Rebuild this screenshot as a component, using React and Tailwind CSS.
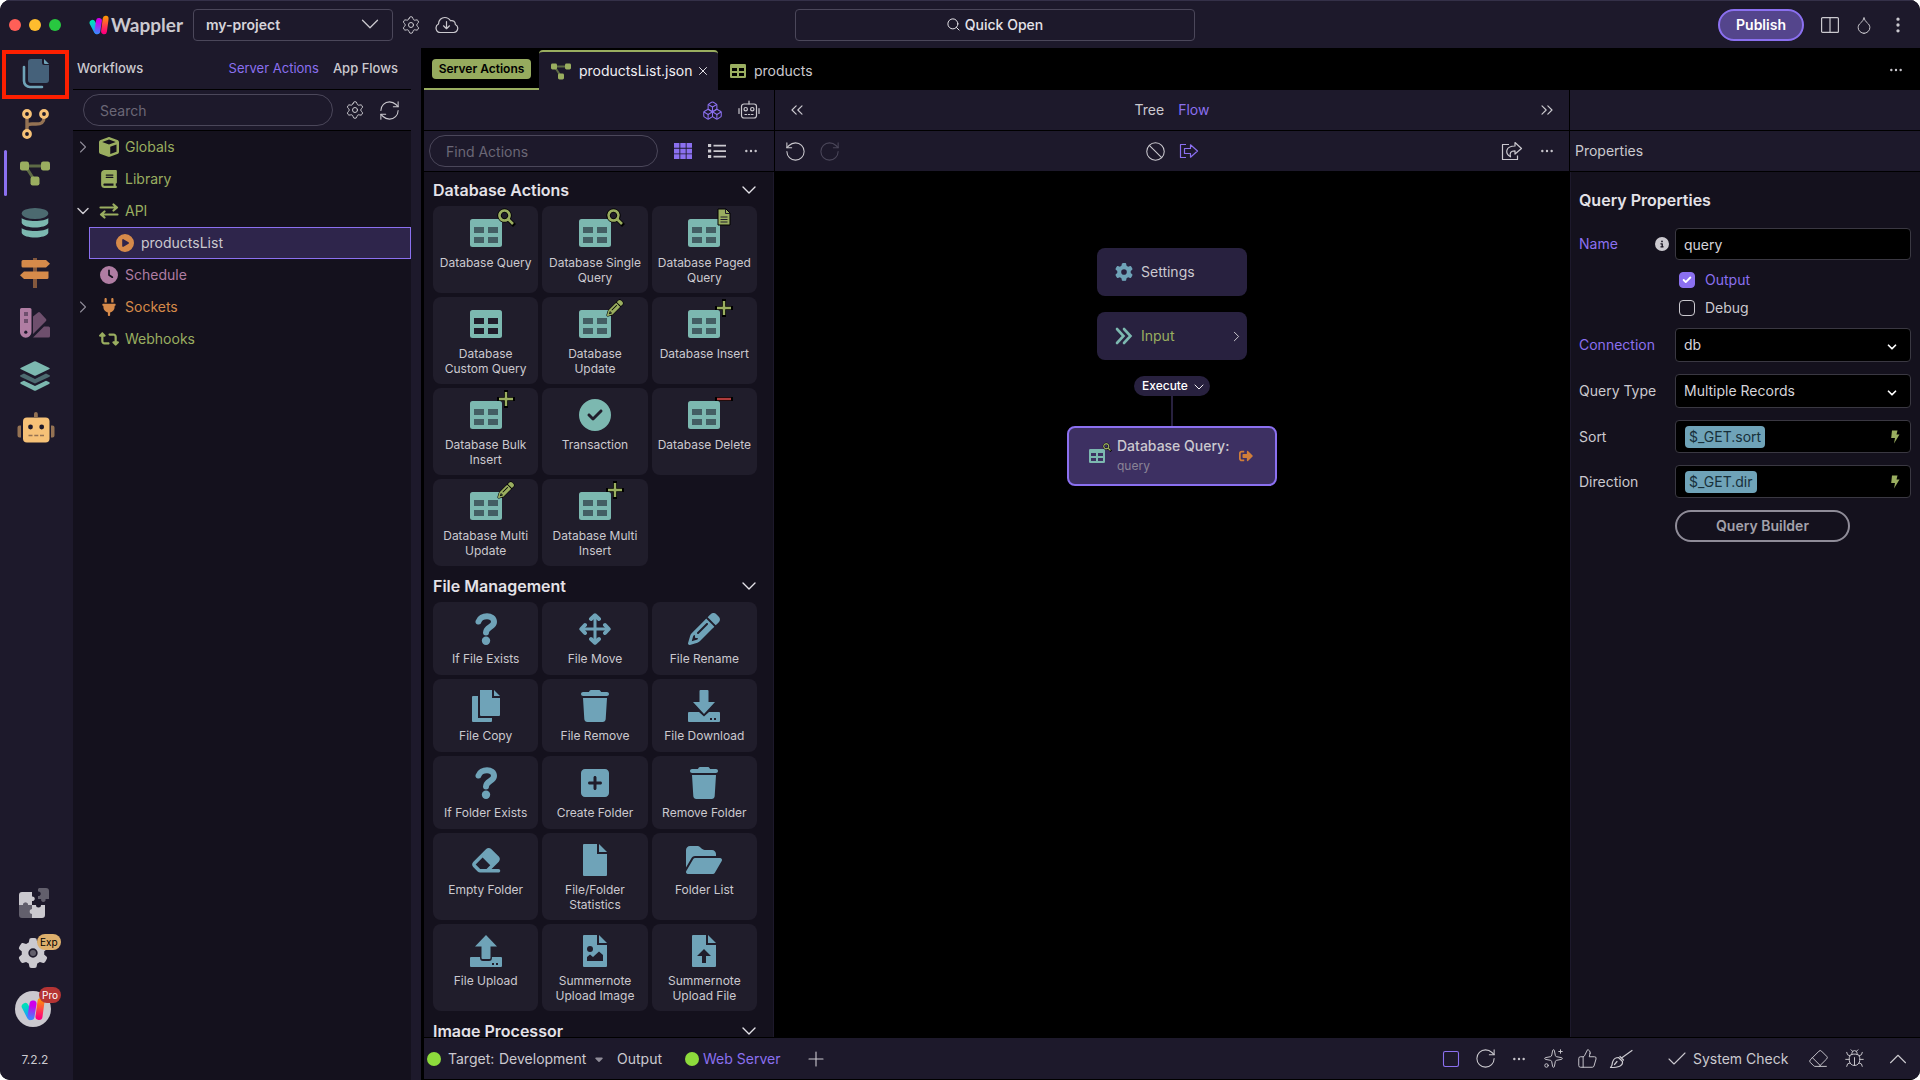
import React, { useState } from "react";
import {
  Ban,
  Boxes,
  Bug,
  Check,
  ChevronDown,
  ChevronRight,
  ChevronUp,
  ChevronsLeft,
  ChevronsRight,
  Droplet,
  Ellipsis,
  EllipsisVertical,
  Eraser,
  Plus,
  RefreshCw,
  RotateCcw,
  RotateCw,
  Search,
  Settings,
  Sparkles,
  Square,
  ThumbsUp,
  X,
} from "lucide-react";
import { FaSignOutAlt } from "react-icons/fa";
import {
  FaBook,
  FaCaretDown,
  FaCircleCheck,
  FaCircleInfo,
  FaCirclePlay,
  FaClock,
  FaCube,
  FaEraser,
  FaFolderOpen,
  FaGear,
  FaPencil,
  FaPlug,
  FaRetweet,
  FaSquarePlus,
  FaTrash,
} from "react-icons/fa6";

/* ---------- drawings ---------- */

const WapplerMark = ({ className, id }) => (
  <svg viewBox="0 0 24 24" className={className} fill="none" strokeWidth="7" strokeLinecap="round" aria-hidden="true">
    <defs>
      <linearGradient id={`${id}-a`} gradientUnits="userSpaceOnUse" x1="4" y1="6" x2="10" y2="22">
        <stop offset="0.1" stopColor="#00e0b8" />
        <stop offset="0.8" stopColor="#1b9dff" />
      </linearGradient>
      <linearGradient id={`${id}-b`} gradientUnits="userSpaceOnUse" x1="12" y1="3" x2="10" y2="22">
        <stop offset="0.3" stopColor="#cf00ea" />
        <stop offset="1" stopColor="#3d86ff" />
      </linearGradient>
      <linearGradient id={`${id}-c`} gradientUnits="userSpaceOnUse" x1="20" y1="1" x2="18" y2="23">
        <stop offset="0" stopColor="#ff9d00" />
        <stop offset="0.9" stopColor="#ff007b" />
      </linearGradient>
    </defs>
    <path d="M4.2 9.5 L9.3 19.5" stroke={`url(#${id}-a)`} />
    <path d="M12 7 L10 19.500" stroke={`url(#${id}-b)`} />
    <path d="M20 4.5 L18 19.5" stroke={`url(#${id}-c)`} />
  </svg>
);

const FilesDuo = () => (
  <svg viewBox="0 0 30 32" className="h-8 w-[30px]" aria-hidden="true">
    <path d="M3 8 V22 a6 6 0 0 0 6 6 H21" fill="none" stroke="#6fa3b8" strokeWidth="2.6" strokeLinecap="round" />
    <path d="M10 0 H21 V4 a2 2 0 0 0 2 2 H28 V21 a3 3 0 0 1 -3 3 H10 a3 3 0 0 1 -3 -3 V3 a3 3 0 0 1 3 -3 Z" fill="#45617a" />
    <path d="M23 0 L28 5 H24 a1 1 0 0 1 -1 -1 Z" fill="#6fa3b8" />
  </svg>
);

const BranchDuo = () => (
  <svg viewBox="0 0 28 32" className="h-8 w-7" fill="none" aria-hidden="true">
    <path d="M6 9 V23 M23 9 C23 15 20 16 15 16 H11 C8 16 6 17 6 19" stroke="#947253" strokeWidth="3.4" />
    <circle cx="6" cy="6" r="3.4" stroke="#f6c177" strokeWidth="3" />
    <circle cx="23" cy="6" r="3.4" stroke="#f6c177" strokeWidth="3" />
    <circle cx="6" cy="26" r="3.4" stroke="#f6c177" strokeWidth="3" />
  </svg>
);

const NodesIcon = ({ className }) => (
  <svg viewBox="0 0 30 25" className={className} aria-hidden="true">
    <path d="M5 5 H25 M6 6 L15 20" stroke="#5d6a45" strokeWidth="3" />
    <rect x="0" y="0.5" width="9" height="9" rx="2.2" fill="#9aae60" />
    <rect x="21" y="0.5" width="9" height="9" rx="2.2" fill="#9aae60" />
    <rect x="10.5" y="15.5" width="9" height="9" rx="2.2" fill="#9aae60" />
  </svg>
);

const DatabaseDuo = () => (
  <svg viewBox="0 0 28 32" className="h-8 w-7" aria-hidden="true">
    <ellipse cx="14" cy="6.5" rx="13.3" ry="5.5" fill="#4c6a70" />
    <path d="M0.7 11 C4 15 24 15 27.3 11 V16 C25 22 3 22 0.7 16 Z" fill="#7cb8b0" />
    <path d="M0.7 21 C4 25 24 25 27.3 21 V26 C25 32 3 32 0.7 26 Z" fill="#7cb8b0" />
  </svg>
);

const SignpostDuo = () => (
  <svg viewBox="0 0 30 32" className="h-8 w-[30px]" aria-hidden="true">
    <path d="M13 1 h4 v30 h-4 Z" fill="#84583d" />
    <path d="M3 3 H26 L30 6.7 L26 10.5 H3 a1.5 1.5 0 0 1 -1.5 -1.5 V4.5 A1.5 1.5 0 0 1 3 3 Z" fill="#d68a4a" />
    <path d="M4 14.5 H28.5 V20.5 a1.5 1.5 0 0 1 -1.5 1.5 H4 L0 18.2 Z" fill="#d68a4a" />
  </svg>
);

const SwatchDuo = () => (
  <svg viewBox="0 0 30 30" className="size-[30px]" aria-hidden="true">
    <path d="M13 8.5 L18 4.5 a1.5 1.5 0 0 1 2 0 L26 11 a1.5 1.5 0 0 1 0 2 L13 26 Z M13 29.5 L24 18.5 H28.5 a1.5 1.5 0 0 1 1.5 1.5 V28 a1.5 1.5 0 0 1 -1.5 1.5 Z" fill="#6e4f6d" />
    <path d="M1.5 0 H10 a1.5 1.5 0 0 1 1.5 1.5 V24 a5.7 5.7 0 0 1 -11.5 0 V1.5 A1.5 1.5 0 0 1 1.5 0 Z" fill="#b07da3" />
    <path d="M4 4 h4 v4 h-4 Z M4 11 h4 v4 h-4 Z" fill="#6e4f6d" />
    <circle cx="5.8" cy="24.2" r="1.6" fill="#1d192b" />
  </svg>
);

const LayersDuo = () => (
  <svg viewBox="0 0 30 30" className="size-[30px]" aria-hidden="true">
    <path d="M0 14.5 L4 12.5 L15 18 L26 12.5 L30 14.5 Q30 15.5 29 16 L15 22.5 L1 16 Q0 15.5 0 14.5 Z" fill="#4c6a70" />
    <path d="M1 6.7 L14 0.4 Q15 0 16 0.4 L29 6.7 Q30.5 7.5 29 8.3 L16 14.5 Q15 15 14 14.5 L1 8.3 Q-0.5 7.5 1 6.7 Z" fill="#7cb8b0" />
    <path d="M1 21 L4 19.7 L15 25 L26 19.7 L29 21 Q30.5 22 29 23 L16 29.5 Q15 30 14 29.5 L1 23 Q-0.5 22 1 21 Z" fill="#7cb8b0" />
  </svg>
);

const RobotDuo = () => (
  <svg viewBox="0 0 38 32" className="h-8 w-[38px]" aria-hidden="true">
    <path d="M17 6 V3 a1.9 1.9 0 0 1 3.8 0 V6 Z M4 14.5 v12 h-1.5 a2 2 0 0 1 -2 -2 v-8 a2 2 0 0 1 2 -2 Z M34 14.5 v12 h1.5 a2 2 0 0 0 2 -2 v-8 a2 2 0 0 0 -2 -2 Z" fill="#947253" />
    <rect x="6" y="6.5" width="26.5" height="25" rx="4" fill="#f6c177" />
    <circle cx="13.5" cy="16" r="2.4" fill="#1d192b" />
    <circle cx="24.7" cy="16" r="2.4" fill="#1d192b" />
    <path d="M11.5 24.5 h4 M17.3 24.5 h4 M23 24.5 h4" stroke="#947253" strokeWidth="1.6" />
  </svg>
);

const PuzzleDuo = () => (
  <svg viewBox="0 0 30 30" className="size-[30px]" aria-hidden="true">
    <path d="M0 17 H4 a2.5 2.5 0 1 1 5 0 H13 V21 a2.5 2.5 0 1 0 0 5 V30 H3 a3 3 0 0 1 -3 -3 Z" fill="#625f6c" />
    <path d="M20 0 H27 a3 3 0 0 1 3 3 V11 H26.5 a2.3 2.3 0 1 1 -4.3 0 H19 V8 a2.3 2.3 0 1 0 0 -4.5 V1 Z" fill="#625f6c" />
    <path d="M3 4 H13 V8.5 a2.3 2.3 0 1 1 0 4.5 V17 H9 a2.5 2.5 0 1 0 -5 0 H0 V7 a3 3 0 0 1 3 -3 Z" fill="#cbc9cf" />
    <path d="M13 17 H17 a2.5 2.5 0 1 0 5 0 H26 V27 a3 3 0 0 1 -3 3 H13 V26 a2.5 2.5 0 1 1 0 -5 Z" fill="#cbc9cf" />
  </svg>
);

const SwapIcon = ({ className }) => (
  <svg viewBox="0 0 20 16" className={className} fill="none" stroke="currentColor" strokeWidth="2.2" strokeLinecap="round" strokeLinejoin="round" aria-hidden="true">
    <path d="M1.5 4.5 H17 M14.5 1.5 L18 4.5 L14.5 7.5 M18.5 11.5 H3 M5.5 8.5 L2 11.5 L5.5 14.5" />
  </svg>
);

const TableIcon = ({ className, cell }) => (
  <svg viewBox="0 0 32 28" className={className} aria-hidden="true">
    <rect width="32" height="28" rx="2.5" fill="currentColor" />
    <path d="M4 8 h10 v6 h-10 Z M18 8 h10 v6 h-10 Z M4 18 h10 v6 h-10 Z M18 18 h10 v6 h-10 Z" fill={cell} />
  </svg>
);

const CloudLine = () => (
  <svg viewBox="0 0 24 18" className="h-[18px] w-6" fill="none" stroke="currentColor" strokeWidth="1.2" strokeLinecap="round" strokeLinejoin="round" aria-hidden="true">
    <path d="M5.500 16.500 A4.500 4.500 0 0 1 3.500 8 C3.500 4 6.500 1.500 9.800 1.500 C12.300 1.500 14.300 2.800 15.500 4.800 C18 4 20.500 5.800 20.300 8.500 A4.200 4.200 0 0 1 18.800 16.500 Z" />
    <path d="M11.500 5.500 V12.500 M8.500 9.800 L11.500 12.700 L14.500 9.800" />
  </svg>
);

const ColumnsLine = () => (
  <svg viewBox="0 0 18 16" className="h-4 w-[18px]" fill="none" stroke="currentColor" strokeWidth="1.2" aria-hidden="true">
    <rect x="0.6" y="0.6" width="16.8" height="14.800" rx="1" />
    <path d="M9 1 V15" />
  </svg>
);

const RobotLine = () => (
  <svg viewBox="0 0 22 20" className="h-5 w-[22px]" fill="none" stroke="currentColor" strokeWidth="1.2" strokeLinecap="round" aria-hidden="true">
    <path d="M11 1 V4" />
    <rect x="3.5" y="4" width="15" height="14" rx="2.5" />
    <circle cx="7.7" cy="9.2" r="1.7" />
    <circle cx="14.3" cy="9.2" r="1.7" />
    <path d="M7 14.5 h1.5 M10.3 14.5 h1.5 M13.5 14.5 h1.5 M1 8.5 V13.5 M21 8.5 V13.5" />
  </svg>
);

const GridIcon = () => (
  <svg viewBox="0 0 18 16" className="h-4 w-[18px]" fill="currentColor" aria-hidden="true">
    <path d="M0 0h5.4v4.7h-5.4Z M6.3 0h5.4v4.7h-5.4Z M12.6 0h5.4v4.7h-5.4Z M0 5.7h5.4v4.7h-5.4Z M6.3 5.7h5.4v4.7h-5.4Z M12.6 5.7h5.4v4.7h-5.4Z M0 11.3h5.4v4.7h-5.4Z M6.3 11.3h5.4v4.7h-5.4Z M12.6 11.3h5.4v4.7h-5.4Z" />
  </svg>
);

const ListIcon = () => (
  <svg viewBox="0 0 18 16" className="h-4 w-[18px]" fill="currentColor" aria-hidden="true">
    <path d="M0 1h3.2v3h-3.2Z M0 6.5h3.2v3h-3.2Z M0 12h3.2v3h-3.2Z M5.5 1.700h12.5v1.700h-12.5Z M5.5 7.2h12.5v1.700h-12.5Z M5.5 12.700h12.5v1.700h-12.5Z" />
  </svg>
);

const ExitLine = () => (
  <svg viewBox="0 0 20 16" className="h-4 w-5" fill="none" stroke="currentColor" strokeWidth="1.2" strokeLinejoin="round" aria-hidden="true">
    <path d="M7 1.5 H1.5 V14.5 H7 M5.5 5.5 H11.5 V1.8 L18.5 8 L11.5 14.2 V10.5 H5.5 Z" />
  </svg>
);

const ShareLine = () => (
  <svg viewBox="0 0 22 20" className="h-5 w-[22px]" fill="none" stroke="currentColor" strokeWidth="1.2" strokeLinejoin="round" aria-hidden="true">
    <path d="M8 3.5 H1.5 V18.5 H16.5 V14.5" />
    <path d="M14 1.5 L20.5 7.5 L14 13 V9.8 C9.5 9.8 8.5 12 9.5 15.8 C3.5 12.5 4.5 5 14 5 Z" />
  </svg>
);

const BrushLine = () => (
  <svg viewBox="0 0 24 20" className="h-5 w-6" fill="none" stroke="currentColor" strokeWidth="1.2" strokeLinecap="round" strokeLinejoin="round" aria-hidden="true">
    <path d="M23 1.5 L12.5 9 M9.5 8.5 L13.5 12.5 C14 17 9.5 18.5 1.5 18.5 C4 16.5 2.5 15 4 12 C5 9.5 7.5 8.5 9.5 8.5 Z M11 7.5 L14.5 11 M8 12.5 L5.5 15.5" />
  </svg>
);

const QuestionIcon = () => (
  <svg viewBox="0 0 32 32" className="size-8" fill="none" stroke="currentColor" strokeWidth="6" strokeLinecap="round" aria-hidden="true">
    <path d="M8.500 8.500 C10.500 1.500 24 1 24 9 C24 14 16 14 16 19.500" />
    <circle cx="16" cy="27.800" r="4.200" fill="currentColor" stroke="none" />
  </svg>
);

const MoveIcon = () => (
  <svg viewBox="0 0 32 32" className="size-8" fill="none" stroke="currentColor" strokeLinecap="round" strokeLinejoin="round" aria-hidden="true">
    <path d="M16 3 V29 M3 16 H29" strokeWidth="3" />
    <path d="M12 6 L16 2.3 L20 6 M12 26 L16 29.7 L20 26 M6 12 L2.3 16 L6 20 M26 12 L29.7 16 L26 20" strokeWidth="4" />
  </svg>
);

const CopyIcon = () => (
  <svg viewBox="0 0 32 32" className="size-8" fill="currentColor" aria-hidden="true">
    <path d="M10 0 H22 V8 H30 V25 a1 1 0 0 1 -1 1 H11 a1 1 0 0 1 -1 -1 Z M24 0 L30 6 H24 Z M2 7 a1 1 0 0 1 1 -1 H8 V28 H22 V31 a1 1 0 0 1 -1 1 H3 a1 1 0 0 1 -1 -1 Z" />
  </svg>
);

const DownloadIcon = () => (
  <svg viewBox="0 0 32 32" className="size-8" fill="currentColor" aria-hidden="true">
    <path d="M12.5 0 h7 a1 1 0 0 1 1 1 V12 H27 L16 24 L5 12 H11.5 V1 a1 1 0 0 1 1 -1 Z" />
    <path d="M1 22 H11 L16 26.5 L21 22 H31 a1 1 0 0 1 1 1 V31 a1 1 0 0 1 -1 1 H1 a1 1 0 0 1 -1 -1 V23 a1 1 0 0 1 1 -1 Z M22 28 v2 h2 v-2 Z M26 28 v2 h2 v-2 Z" fillRule="evenodd" />
  </svg>
);

const UploadIcon = () => (
  <svg viewBox="0 0 32 32" className="size-8" fill="currentColor" aria-hidden="true">
    <path d="M16 0 L27 11.5 H20.5 V23 a1 1 0 0 1 -1 1 h-7 a1 1 0 0 1 -1 -1 V11.5 H5 Z" />
    <path d="M1 22 H10 C10 25 11 26 13 26 H19 C21 26 22 25 22 22 H31 a1 1 0 0 1 1 1 V31 a1 1 0 0 1 -1 1 H1 a1 1 0 0 1 -1 -1 V23 a1 1 0 0 1 1 -1 Z M22 28 v2 h2 v-2 Z M26 28 v2 h2 v-2 Z" fillRule="evenodd" />
  </svg>
);

const FileShape = ({ children }) => (
  <svg viewBox="0 0 32 32" className="size-8" fill="currentColor" aria-hidden="true">
    <path d="M5 0 H18 V10 H28 V31 a1 1 0 0 1 -1 1 H5 a1 1 0 0 1 -1 -1 V1 a1 1 0 0 1 1 -1 Z M20 0 L28 8 H20 Z" />
    {children}
  </svg>
);

const DoubleChevron = () => (
  <svg viewBox="0 0 18 18" className="size-[18px]" fill="none" stroke="#7cb8b0" strokeWidth="2.6" strokeLinecap="round" aria-hidden="true">
    <path d="M2 2 L8.500 9 L2 16 M9 2 L15.500 9 L9 16" />
  </svg>
);

const BoltIcon = () => (
  <svg viewBox="0 0 10 14" className="h-3.5 w-2.5" fill="#9aae60" aria-hidden="true">
    <path d="M2 0.500 H7.500 L6.500 4.500 H9.500 L4 13.500 L5 8 H1.200 Z" />
  </svg>
);

// small marks on the corner of an action icon, outlined in black
const Badge = ({ d, color, width }) => (
  <svg viewBox="0 0 16 16" className="size-4 overflow-visible" fill="none" aria-hidden="true">
    <path d={d} stroke="#000" strokeWidth={width + 1.6} strokeLinecap="square" />
    <path d={d} stroke={color} strokeWidth={width} />
  </svg>
);

const badges = {
  search: <Badge d="M6.500 1.500 a5 5 0 1 0 0.010 0 M10.500 10.500 L15 15" color="#9aae60" width={2.6} />,
  plus: <Badge d="M8 1 V15 M1 8 H15" color="#9aae60" width={2.4} />,
  minus: <Badge d="M1 8 H15" color="#b03c3c" width={2.4} />,
  pencil: (
    <FaPencil className="size-4 overflow-visible stroke-black stroke-[36px] text-[#9aae60] [paint-order:stroke]" />
  ),
  page: (
    <svg viewBox="0 0 16 16" className="size-4 overflow-visible" aria-hidden="true">
      <path d="M2 0 H10 L14 4 V16 H2 Z" fill="#9aae60" stroke="#000" strokeWidth="1" />
      <path d="M9.500 0 V4.500 H14 M4.500 8 H11.500 M4.500 10.500 H11.500 M4.500 13 H11.500" stroke="#201d2b" fill="none" />
    </svg>
  ),
};

/* ---------- data ---------- */

const railItems = [
  { name: "Workflows", icon: <NodesIcon className="h-[25px] w-[30px]" />, active: true },
  { name: "Databases", icon: <DatabaseDuo /> },
  { name: "Routing", icon: <SignpostDuo /> },
  { name: "Design", icon: <SwatchDuo /> },
];

const treeItems = [
  { name: "Globals", icon: <FaCube className="size-5" />, color: "text-[#9aae60]", chevron: "right" },
  { name: "Library", icon: <FaBook className="size-[18px]" />, color: "text-[#9aae60]" },
  { name: "API", icon: <SwapIcon className="h-4 w-5" />, color: "text-[#9aae60]", chevron: "down" },
  { name: "productsList", icon: <FaCirclePlay className="size-[18px] text-[#d68a4a]" />, color: "text-[#cbc9cf]", selected: true },
  { name: "Schedule", icon: <FaClock className="size-[18px]" />, color: "text-[#b07da3]" },
  { name: "Sockets", icon: <FaPlug className="size-[18px]" />, color: "text-[#d68a4a]", chevron: "right" },
  { name: "Webhooks", icon: <FaRetweet className="size-5" />, color: "text-[#9aae60]" },
];

const databaseActions = [
  { name: "Database Query", badge: "search" },
  { name: "Database Single Query", badge: "search" },
  { name: "Database Paged Query", badge: "page" },
  { name: "Database Custom Query" },
  { name: "Database Update", badge: "pencil" },
  { name: "Database Insert", badge: "plus" },
  { name: "Database Bulk Insert", badge: "plus" },
  { name: "Transaction", icon: <FaCircleCheck className="size-8" /> },
  { name: "Database Delete", badge: "minus" },
  { name: "Database Multi Update", badge: "pencil" },
  { name: "Database Multi Insert", badge: "plus" },
];

const fileActions = [
  { name: "If File Exists", icon: <QuestionIcon /> },
  { name: "File Move", icon: <MoveIcon /> },
  { name: "File Rename", icon: <FaPencil className="size-8" /> },
  { name: "File Copy", icon: <CopyIcon /> },
  { name: "File Remove", icon: <FaTrash className="size-8" /> },
  { name: "File Download", icon: <DownloadIcon /> },
  { name: "If Folder Exists", icon: <QuestionIcon /> },
  { name: "Create Folder", icon: <FaSquarePlus className="size-8" /> },
  { name: "Remove Folder", icon: <FaTrash className="size-8" /> },
  { name: "Empty Folder", icon: <FaEraser className="size-8" /> },
  { name: "File/Folder Statistics", icon: <FileShape /> },
  { name: "Folder List", icon: <FaFolderOpen className="size-9" /> },
  { name: "File Upload", icon: <UploadIcon /> },
  {
    name: "Summernote Upload Image",
    icon: (
      <FileShape>
        <circle cx="11" cy="14" r="3" fill="#201d2b" />
        <path d="M8 26 V22 L11 19.5 L14 22 L20 16.5 L24 20 V26 Z" fill="#201d2b" />
      </FileShape>
    ),
  },
  {
    name: "Summernote Upload File",
    icon: (
      <FileShape>
        <path d="M16 14 L23 21 H18 V28 H14 V21 H9 Z" fill="#201d2b" />
      </FileShape>
    ),
  },
];

/* ---------- pieces ---------- */

const IconButton = ({ label, width = "w-5", className = "", children }) => (
  <button type="button" aria-label={label} className={`flex h-8 shrink-0 items-center justify-center [&>svg]:shrink-0 ${width} ${className}`}>
    {children}
  </button>
);

const ActionCard = ({ name, icon, badge }) => (
  <button type="button" className="flex min-h-[73px] flex-col items-center justify-start rounded-lg bg-[#201d2b] px-1 pt-[11px] pb-2">
    <span className="relative flex h-8 items-center">
      {icon || <TableIcon className="h-7 w-8" cell={badge ? "#435e63" : "#201d2b"} />}
      {badge && <span className="absolute -top-2 left-7">{badges[badge]}</span>}
    </span>
    <span className="mt-1.5 text-center text-xs leading-[15px] text-[#cbc9cf]">{name}</span>
  </button>
);

const ActionSection = ({ title, color, items }) => (
  <section>
    <h3 className="flex h-[34px] items-center justify-between pt-0.5 text-base font-semibold text-[#e4e2e8]">
      {title}
      <ChevronDown size={24} strokeWidth={1.4} className="-mr-1" />
    </h3>
    <div className={`grid grid-cols-3 gap-1 ${color}`}>
      {items.map((item) => (
        <ActionCard key={item.name} {...item} />
      ))}
    </div>
  </section>
);

const TitleBar = () => (
  <header className="flex h-12 shrink-0 items-center border-t border-[#343048] bg-[#1d192b]">
    <div className="flex w-[73px] shrink-0 gap-2 pl-[9px]">
      <span className="size-3 rounded-full bg-[#ff5f57]" />
      <span className="size-3 rounded-full bg-[#febc2e]" />
      <span className="size-3 rounded-full bg-[#28c840]" />
    </div>
    <div className="grid flex-1 grid-cols-[1fr_400px_1fr] items-center pr-1">
      <div className="flex items-center pl-4">
        <WapplerMark id="bar" className="size-5" />
        <span className="ml-0.5 w-[82px] font-['Lato'] text-[19px] font-bold text-[#cbc9cf]">Wappler</span>
        <div className="relative w-[200px]">
          <select aria-label="Project" className="h-8 w-full appearance-none rounded border border-[#4b475a] bg-transparent px-3 text-sm font-semibold text-[#d6d4da]">
            <option>my-project</option>
          </select>
          <ChevronDown size={30} strokeWidth={1} className="pointer-events-none absolute top-0 right-2" />
        </div>
        <IconButton label="Project settings" className="ml-2">
          <Settings size={20} strokeWidth={1.2} />
        </IconButton>
        <IconButton label="Download" width="w-6" className="ml-3.5">
          <CloudLine />
        </IconButton>
      </div>
      <button type="button" className="flex h-8 items-center justify-center gap-1 rounded border border-[#4b475a] text-sm font-medium text-[#e4e2e8]">
        <Search size={15} strokeWidth={1.6} />
        Quick Open
      </button>
      <div className="flex items-center justify-end pr-2">
        <button type="button" className="h-8 w-[86px] rounded-full border-2 border-[#8b70f0] bg-[#54458c] text-sm font-semibold text-white">
          Publish
        </button>
        <IconButton label="Layout" className="ml-4">
          <ColumnsLine />
        </IconButton>
        <IconButton label="Theme" className="ml-3.5">
          <Droplet size={20} strokeWidth={1.2} />
        </IconButton>
        <IconButton label="Menu" className="ml-3.5">
          <EllipsisVertical size={20} strokeWidth={2} />
        </IconButton>
      </div>
    </div>
  </header>
);

const ActivityRail = () => (
  <nav aria-label="Managers" className="flex w-[73px] shrink-0 flex-col bg-[#1d192b]">
    <button type="button" aria-label="Files" className="mt-0.5 ml-0.5 flex h-[49px] w-[67px] items-center justify-center border-4 border-[#fd1f00]">
      <FilesDuo />
    </button>
    <button type="button" aria-label="Git" className="flex h-[49px] w-[70px] items-center justify-center">
      <BranchDuo />
    </button>
    {railItems.map((item) => (
      <button key={item.name} type="button" aria-label={item.name} className="relative flex h-[50px] w-[70px] items-center justify-center">
        {item.active && <span className="absolute top-0.5 left-1 h-[46px] w-[3px] rounded-full bg-[#8b70f0]" />}
        {item.icon}
      </button>
    ))}
    <button type="button" aria-label="Assets" className="flex h-14 w-[70px] items-center justify-center">
      <LayersDuo />
    </button>
    <button type="button" aria-label="AI Assistant" className="flex h-[46px] w-[72px] items-center justify-center">
      <RobotDuo />
    </button>
    <button type="button" aria-label="Extensions" className="mt-auto flex h-[50px] w-[68px] items-center justify-center">
      <PuzzleDuo />
    </button>
    <button type="button" className="relative flex h-[50px] w-[66px] items-center justify-center">
      <FaGear className="size-[30px] text-[#cbc9cf]" />
      <span className="absolute size-1.5 rounded-full bg-[#625f6c]" />
      <span className="absolute top-1.5 left-[37px] rounded-full bg-[#deb06d] px-[3px] text-[10px] leading-4 text-black">Exp</span>
    </button>
    <button type="button" className="relative flex h-[62px] w-[66px] items-center justify-center">
      <span className="flex size-9 items-center justify-center rounded-full bg-[#cbc9cf]">
        <WapplerMark id="user" className="size-6" />
      </span>
      <span className="absolute top-[9px] left-[39px] rounded-full bg-[#b53434] px-[3px] text-[10px] leading-4 text-white">Pro</span>
    </button>
    <span className="flex h-10 w-[70px] items-center justify-center text-xs text-[#cbc9cf]">7.2.2</span>
  </nav>
);

const Sidebar = () => (
  <aside className="flex w-[348px] shrink-0 flex-col bg-[#1d192b] pr-2.5">
    <div className="flex h-[42px] items-center justify-between border-b border-black pr-[13px] pl-1 text-[13px] text-[#cbc9cf]">
      <h2 className="font-medium">Workflows</h2>
      <div className="flex gap-3.5">
        <button type="button" className="text-[#8b70f0]">Server Actions</button>
        <button type="button" className="font-medium">App Flows</button>
      </div>
    </div>
    <div className="flex h-[41px] items-center border-b border-black pl-2.5">
      <input type="search" aria-label="Search" placeholder="Search" className="h-8 w-[250px] rounded-full border border-[#4b475a] bg-transparent px-4 placeholder:text-[#6b6776]" />
      <IconButton label="Tree settings" className="ml-3">
        <Settings size={20} strokeWidth={1.2} />
      </IconButton>
      <IconButton label="Refresh" className="ml-3.5">
        <RefreshCw size={23} strokeWidth={1.1} />
      </IconButton>
    </div>
    <ul className="flex-1 bg-[#14111d]">
      {treeItems.map((item) =>
        item.selected ? (
          <li key={item.name} className="ml-4 flex h-8 items-center gap-1.5 border border-[#8b70f0] bg-[#2e254b] pl-[25px]">
            <span className="flex w-5 shrink-0 justify-center">{item.icon}</span>
            <span className={item.color}>{item.name}</span>
          </li>
        ) : (
          <li key={item.name} className={`flex h-8 items-center ${item.color}`}>
            <span className="flex w-[26px] shrink-0 text-[#cbc9cf]">
              {item.chevron === "right" && <ChevronRight size={20} strokeWidth={1.3} className="text-[#8f8c98]" />}
              {item.chevron === "down" && <ChevronDown size={20} strokeWidth={1.8} />}
            </span>
            <span className="mr-1.5 flex w-5 shrink-0 justify-center">{item.icon}</span>
            {item.name}
          </li>
        )
      )}
    </ul>
  </aside>
);

const TabBar = () => (
  <div className="flex h-[42px] shrink-0 items-end bg-black">
    <div className="flex h-10 items-center border-b-2 border-[#9aae60] px-2">
      <span className="w-[99px] rounded bg-[#96ab5e] text-center text-xs leading-5 font-semibold text-black">Server Actions</span>
    </div>
    <div className="flex h-10 w-[179px] items-center rounded-t border-t-2 border-[#9aae60] bg-[#1d192b] pl-3 text-[#f1eff4]">
      <NodesIcon className="h-[17px] w-5" />
      <span className="ml-2 w-[117px]">productsList.json</span>
      <button type="button" aria-label="Close tab">
        <X size={14} strokeWidth={1.6} />
      </button>
    </div>
    <div className="flex h-10 items-center pt-0.5 pl-3 text-[#cbc9cf]">
      <TableIcon className="mr-2 h-3.5 w-4 text-[#9aae60]" cell="#000" />
      products
    </div>
    <IconButton label="More tabs" width="w-4" className="mr-4 mb-1 ml-auto">
      <Ellipsis size={16} strokeWidth={1.6} />
    </IconButton>
  </div>
);

const ActionsPanel = () => (
  <section className="flex w-[351px] shrink-0 flex-col border-r border-black bg-[#1d192b]">
    <div className="flex h-[41px] shrink-0 items-center justify-end gap-4 border-b border-black pr-3.5">
      <IconButton label="Actions" className="text-[#8b70f0]">
        <Boxes size={21} strokeWidth={1.2} />
      </IconButton>
      <IconButton label="AI" width="w-[22px]">
        <RobotLine />
      </IconButton>
    </div>
    <div className="flex h-[41px] shrink-0 items-center border-b border-black pl-[5px]">
      <input type="search" aria-label="Find Actions" placeholder="Find Actions" className="h-8 w-[229px] rounded-full border border-[#4b475a] bg-transparent px-4 placeholder:text-[#6b6776]" />
      <IconButton label="Grid view" width="w-[18px]" className="ml-4 text-[#8b70f0]">
        <GridIcon />
      </IconButton>
      <IconButton label="List view" width="w-[18px]" className="ml-4">
        <ListIcon />
      </IconButton>
      <IconButton label="More" width="w-4" className="ml-[17px]">
        <Ellipsis size={16} strokeWidth={1.6} />
      </IconButton>
    </div>
    <div className="flex min-h-0 flex-1 flex-col gap-0.5 overflow-hidden border-r border-[#1d192b] bg-[#14111d] pr-4 pl-[9px]">
      <ActionSection title="Database Actions" color="text-[#7cb8b0]" items={databaseActions} />
      <ActionSection title="File Management" color="text-[#6fa3b8]" items={fileActions} />
      <ActionSection title="Image Processor" color="text-[#6fa3b8]" items={[]} />
    </div>
  </section>
);

const FlowPanel = () => (
  <section className="flex min-w-0 flex-1 flex-col">
    <div className="grid h-[41px] shrink-0 grid-cols-3 items-center border-b border-black bg-[#1d192b] px-3">
      <IconButton label="Collapse left" className="justify-self-start">
        <ChevronsLeft size={20} strokeWidth={1.4} />
      </IconButton>
      <div className="flex justify-center gap-3.5">
        <button type="button">Tree</button>
        <button type="button" className="text-[#8b70f0]">Flow</button>
      </div>
      <IconButton label="Collapse right" className="justify-self-end">
        <ChevronsRight size={20} strokeWidth={1.4} />
      </IconButton>
    </div>
    <div className="grid h-[41px] shrink-0 grid-cols-3 items-center border-b border-black bg-[#1d192b] px-2.5">
      <div className="flex gap-3.5">
        <IconButton label="Undo">
          <RotateCcw size={23} strokeWidth={1.1} />
        </IconButton>
        <IconButton label="Redo" className="text-[#4b475a]">
          <RotateCw size={23} strokeWidth={1.1} />
        </IconButton>
      </div>
      <div className="flex justify-center gap-3.5">
        <IconButton label="Disable">
          <Ban size={21} strokeWidth={1.2} />
        </IconButton>
        <IconButton label="Output" className="text-[#8b70f0]">
          <ExitLine />
        </IconButton>
      </div>
      <div className="flex justify-end gap-4">
        <IconButton label="Share" width="w-[22px]">
          <ShareLine />
        </IconButton>
        <IconButton label="More" width="w-4" className="mr-1">
          <Ellipsis size={16} strokeWidth={1.6} />
        </IconButton>
      </div>
    </div>
    <div className="flex flex-1 flex-col items-center bg-black pt-[76px]">
      <div className="flex h-12 w-[150px] items-center gap-2 rounded-lg bg-[#28213f] pl-[18px]">
        <FaGear className="size-[18px] text-[#6fa3b8]" />
        Settings
      </div>
      <div className="mt-4 flex h-12 w-[150px] items-center gap-2 rounded-lg bg-[#28213f] pr-0.5 pl-[18px] text-[#9aae60]">
        <DoubleChevron />
        Input
        <ChevronRight size={17} strokeWidth={1.4} className="ml-auto text-[#cbc9cf]" />
      </div>
      <button type="button" className="mt-4 flex h-5 w-[76px] items-center justify-between rounded-full bg-[#28213f] pr-[3px] pl-2 text-xs font-medium text-white">
        Execute
        <ChevronDown size={16} strokeWidth={1.4} className="mt-0.5" />
      </button>
      <div className="h-[30px] w-0.5 bg-[#28213f]" />
      <div className="flex h-[60px] w-[210px] items-center rounded-lg border-2 border-[#8b70f0] bg-[#3d3062] pl-5">
        <span className="relative">
          <TableIcon className="h-3.5 w-4 text-[#7cb8b0]" cell="#3d3062" />
          <span className="absolute -top-1.5 left-3.5 [&>svg]:size-2">{badges.search}</span>
        </span>
        <span className="ml-3 flex w-[122px] flex-col">
          <span className="leading-5 font-medium text-[#cbc9cf]">Database Query:</span>
          <span className="text-xs leading-5 text-[#8a8496]">query</span>
        </span>
        <FaSignOutAlt className="size-3.5 text-[#d07e3a]" />
      </div>
    </div>
  </section>
);

const Field = ({ label, htmlFor, highlight, info, children }) => (
  <div className="flex items-center">
    <div className="flex w-24 shrink-0 items-center justify-between pr-1.5">
      <label htmlFor={htmlFor} className={highlight ? "text-[#8b70f0]" : ""}>{label}</label>
      {info && <FaCircleInfo className="size-3.5" />}
    </div>
    <div className="relative min-w-0 flex-1">{children}</div>
  </div>
);

const SelectField = ({ id, value }) => (
  <>
    <select id={id} className="block h-[34px] w-full appearance-none rounded border border-[#3a3842] bg-black px-2 text-[#d6d4da]">
      <option>{value}</option>
    </select>
    <ChevronDown size={14} strokeWidth={3} className="pointer-events-none absolute top-3 right-3 text-white" />
  </>
);

const BindingField = ({ id, value, onChange }) => (
  <div className="flex h-[33px] items-center rounded border border-[#3a3842] bg-black pr-2.5 pl-[9px]">
    <input id={id} value={value} onChange={onChange} className="field-sizing-content h-[22px] rounded-sm bg-[#6fa3b8] px-1 text-[#17303a]" />
    <span className="ml-auto">
      <BoltIcon />
    </span>
  </div>
);

const PropertiesPanel = () => {
  const [name, setName] = useState("query");
  const [output, setOutput] = useState(true);
  const [debug, setDebug] = useState(false);
  const [sort, setSort] = useState("$_GET.sort");
  const [direction, setDirection] = useState("$_GET.dir");

  return (
    <section className="flex w-[351px] shrink-0 flex-col border-l border-black bg-[#1d192b]">
      <div className="h-[41px] shrink-0 border-b border-black" />
      <div className="flex h-[41px] shrink-0 items-center border-b border-black pl-[5px]">Properties</div>
      <div className="flex flex-1 flex-col gap-3 border-l border-[#1d192b] bg-[#14111d] pt-4 pr-[9px] pl-2">
        <h3 className="mb-1 text-base leading-6 font-semibold text-[#e4e2e8]">Query Properties</h3>
        <Field label="Name" htmlFor="name" highlight info>
          <input id="name" value={name} onChange={(e) => setName(e.target.value)} className="block h-8 w-full rounded border border-[#3a3842] bg-black px-2 text-[#d6d4da]" />
        </Field>
        <label className="ml-[100px] flex h-4 items-center gap-2.5 text-[#8b70f0]">
          <span className="relative flex">
            <input type="checkbox" checked={output} onChange={(e) => setOutput(e.target.checked)} className="size-4 appearance-none rounded border border-[#cbc9cf] checked:border-[#8b70f0] checked:bg-[#8b70f0]" />
            {output && <Check size={10} strokeWidth={4.5} className="pointer-events-none absolute top-[3px] left-[3px] text-white" />}
          </span>
          Output
        </label>
        <label className="ml-[100px] flex h-4 items-center gap-2.5">
          <input type="checkbox" checked={debug} onChange={(e) => setDebug(e.target.checked)} className="size-4 appearance-none rounded border border-[#cbc9cf] checked:border-[#8b70f0] checked:bg-[#8b70f0]" />
          Debug
        </label>
        <Field label="Connection" htmlFor="connection" highlight>
          <SelectField id="connection" value="db" />
        </Field>
        <Field label="Query Type" htmlFor="query-type">
          <SelectField id="query-type" value="Multiple Records" />
        </Field>
        <Field label="Sort" htmlFor="sort">
          <BindingField id="sort" value={sort} onChange={(e) => setSort(e.target.value)} />
        </Field>
        <Field label="Direction" htmlFor="direction">
          <BindingField id="direction" value={direction} onChange={(e) => setDirection(e.target.value)} />
        </Field>
        <button type="button" className="ml-24 h-8 w-[175px] rounded-full border-2 border-[#8f8c98] font-semibold text-[#a3a1ab]">
          Query Builder
        </button>
      </div>
    </section>
  );
};

const StatusBar = () => (
  <footer className="flex h-[43px] shrink-0 items-center border-y border-black bg-[#1d192b] pr-3 pl-[3px]">
    <span className="size-3.5 rounded-full bg-[#8ddb3c]" />
    <label htmlFor="target" className="ml-[7px] w-[51px]">Target:</label>
    <div className="relative w-[118px]">
      <select id="target" className="w-full appearance-none bg-transparent">
        <option>Development</option>
      </select>
      <FaCaretDown className="pointer-events-none absolute top-1 right-3 size-3 text-[#8f8c98]" />
    </div>
    <button type="button" className="w-[68px] text-left">Output</button>
    <button type="button" className="flex items-center gap-1 text-[#8b70f0]">
      <span className="size-3.5 rounded-full bg-[#8ddb3c]" />
      Web Server
    </button>
    <IconButton label="New terminal" className="ml-[26px]">
      <Plus size={24} strokeWidth={1.1} />
    </IconButton>
    <div className="ml-auto flex items-center">
      <IconButton label="Panel" className="text-[#8b70f0]">
        <Square size={20} strokeWidth={1.3} />
      </IconButton>
      <IconButton label="Reload" className="ml-3.5">
        <RotateCw size={23} strokeWidth={1.1} />
      </IconButton>
      <IconButton label="More" width="w-4" className="ml-4">
        <Ellipsis size={16} strokeWidth={1.6} />
      </IconButton>
      <IconButton label="AI suggestions" className="ml-4">
        <Sparkles size={21} strokeWidth={1.1} />
      </IconButton>
      <IconButton label="Feedback" className="ml-3.5">
        <ThumbsUp size={21} strokeWidth={1.1} />
      </IconButton>
      <IconButton label="Clean" width="w-6" className="ml-3">
        <BrushLine />
      </IconButton>
      <button type="button" className="ml-8 flex w-[123px] shrink-0 items-center gap-1 whitespace-nowrap">
        <Check size={24} strokeWidth={1.1} className="shrink-0" />
        System Check
      </button>
      <IconButton label="Clear" className="ml-5">
        <Eraser size={21} strokeWidth={1.1} />
      </IconButton>
      <IconButton label="Debug" className="ml-4">
        <Bug size={21} strokeWidth={1.1} />
      </IconButton>
      <IconButton label="Expand" className="ml-6">
        <ChevronUp size={30} strokeWidth={0.9} />
      </IconButton>
    </div>
  </footer>
);

const App = () => {
  return (
    <div className="h-screen bg-white">
      <div className="flex h-full flex-col overflow-hidden rounded-[10px] bg-black font-['Inter',sans-serif] text-sm text-[#cbc9cf]">
        <TitleBar />
        <div className="flex min-h-0 flex-1">
          <ActivityRail />
          <Sidebar />
          <main className="flex min-w-0 flex-1 flex-col border-l-3 border-black">
            <TabBar />
            <div className="flex min-h-0 flex-1">
              <ActionsPanel />
              <FlowPanel />
              <PropertiesPanel />
            </div>
            <StatusBar />
          </main>
        </div>
      </div>
    </div>
  );
};

export default App;
